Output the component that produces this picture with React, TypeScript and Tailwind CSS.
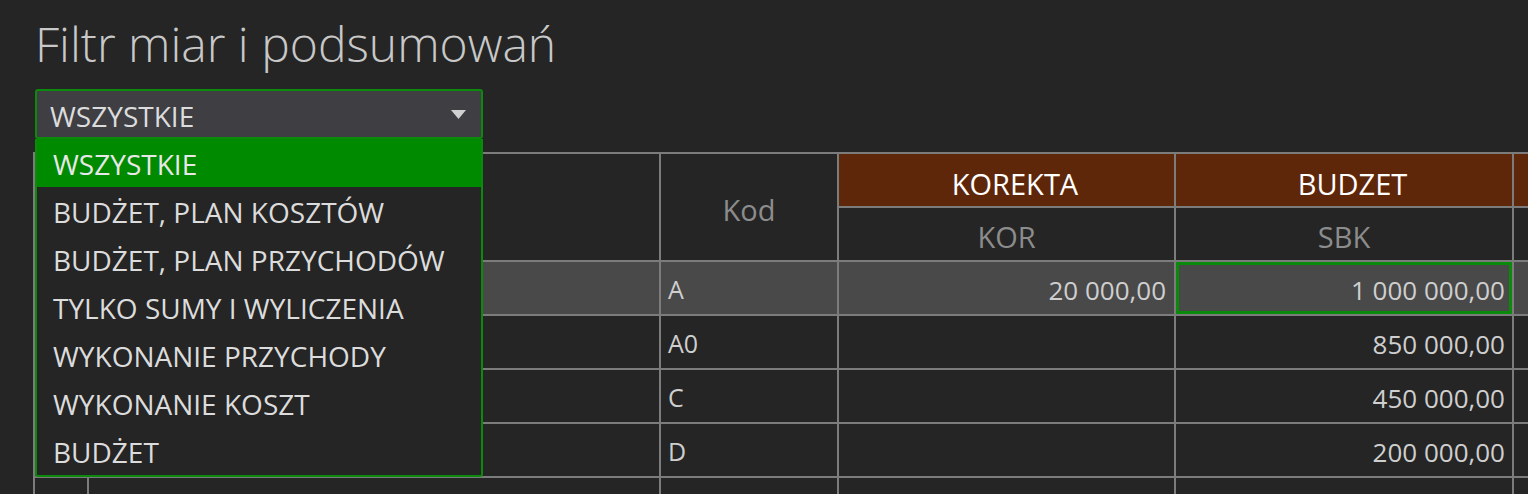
const OPTIONS = [
  'WSZYSTKIE',
  'BUDŻET, PLAN KOSZTÓW',
  'BUDŻET, PLAN PRZYCHODÓW',
  'TYLKO SUMY I WYLICZENIA',
  'WYKONANIE PRZYCHODY',
  'WYKONANIE KOSZT',
  'BUDŻET',
]

const ROWS = [
  { kod: 'A', kor: '20 000,00', sbk: '1 000 000,00', active: true },
  { kod: 'A0', kor: '', sbk: '850 000,00' },
  { kod: 'C', kor: '', sbk: '450 000,00' },
  { kod: 'D', kor: '', sbk: '200 000,00' },
  { kod: '', kor: '', sbk: '' },
]

export default function App() {
  return (
    <div
      className="h-[494px] w-full overflow-hidden bg-[#252525] pl-[35px] pt-[11px] text-[#d4d4d4]"
      style={{ fontFamily: '"Open Sans", "Noto Sans", sans-serif' }}
    >
      <h1 className="h-[78px] text-[48px] font-light leading-[65px] text-[#c8c8c8]">Filtr miar i podsumowań</h1>

      <div className="relative">
        {/* Select */}
        <div className="flex h-[50px] w-[448px] items-center justify-between rounded-[3px] border-2 border-[#0b8a0b] bg-[#3e3e43] pl-[13px] pr-[15px] text-[28px] text-[#dcdcdc]">
          <span className="pt-[3px]">WSZYSTKIE</span>
          <svg width="15" height="9" viewBox="0 0 15 9">
            <path d="M0 0 H15 L7.5 9 Z" fill="#d0d0d0" />
          </svg>
        </div>

        {/* Open list */}
        <div className="absolute left-0 top-[50px] z-10 w-[448px] rounded-b-[3px] border-2 border-t-0 border-[#0b8a0b] bg-[#252525]">
          {OPTIONS.map((o, i) => (
            <div
              key={o}
              className={`flex h-[48px] items-center pl-[16px] pt-[2px] text-[28px] ${i === 0 ? 'bg-[#008a00] text-[#e8e8e8]' : 'text-[#dcdcdc]'}`}
            >
              {o}
            </div>
          ))}
        </div>

        {/* Table */}
        <div className="mt-[13px] -ml-[2px] grid w-[calc(100%+2px)] grid-cols-[52px_570px_176px_335px_336px_1fr] gap-[2px] bg-[#7c7c7c] pl-[2px] pt-[2px]">
          <div className="row-span-2 bg-[#252525]" />
          <div className="row-span-2 bg-[#252525]" />
          <div className="row-span-2 flex items-center justify-center bg-[#252525] pt-[6px] text-[29px] text-[#8c8c8c]">Kod</div>
          <div className="flex h-[52px] items-center justify-center bg-[#5f270a] pl-[17px] pt-[7px] text-[29px] text-white">KOREKTA</div>
          <div className="flex h-[52px] items-center justify-center bg-[#5f270a] pl-[17px] pt-[7px] text-[29px] text-white">BUDZET</div>
          <div className="bg-[#5f270a]" />
          <div className="flex h-[52px] items-center justify-center bg-[#252525] pt-[6px] text-[29px] text-[#8c8c8c]">KOR</div>
          <div className="flex h-[52px] items-center justify-center bg-[#252525] pt-[6px] text-[29px] text-[#8c8c8c]">SBK</div>
          <div className="bg-[#252525]" />

          {ROWS.map((r, i) => {
            const bg = r.active ? 'bg-[#494949]' : 'bg-[#252525]'
            return [
              <div key={`a${i}`} className={`h-[52px] ${bg}`} />,
              <div key={`b${i}`} className={bg} />,
              <div key={`c${i}`} className={`flex items-center pl-[7px] pt-[4px] text-[25px] text-[#cfcfcf] ${bg}`}>{r.kod}</div>,
              <div key={`d${i}`} className={`flex items-center justify-end pr-[8px] pt-[4px] text-[26px] text-[#cfcfcf] ${bg}`}>{r.kor}</div>,
              <div
                key={`e${i}`}
                className={`flex items-center justify-end pt-[4px] text-[26px] text-[#cfcfcf] ${bg} ${r.active ? 'border-[3px] border-[#0a8a0a] pr-[4px]' : 'pr-[7px]'}`}
              >
                {r.sbk}
              </div>,
              <div key={`f${i}`} className={bg} />,
            ]
          })}
        </div>
      </div>
    </div>
  )
}
